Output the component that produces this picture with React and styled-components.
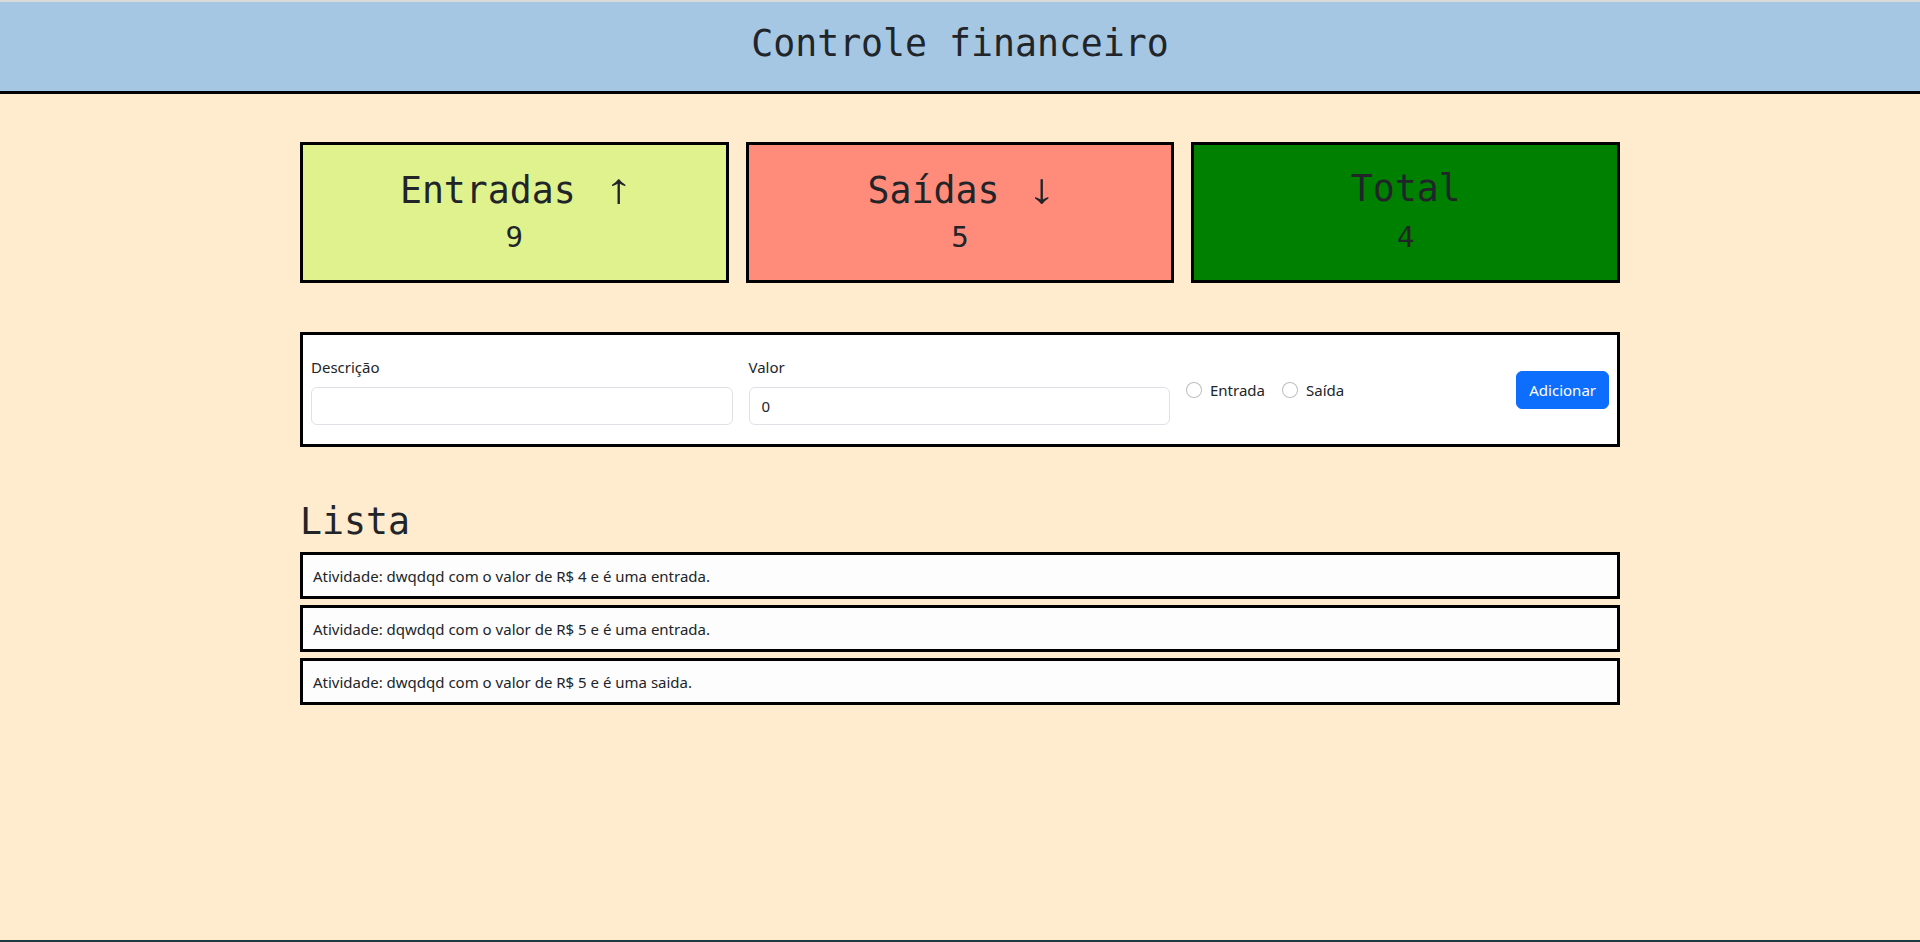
import React from 'react';
import styled, { createGlobalStyle } from 'styled-components';

const GlobalStyle = createGlobalStyle`
  html, body { margin: 0; padding: 0; }
  body {
    background: #ffebcd;
    font-family: "Noto Sans", sans-serif;
    color: #212529;
  }
  *, *::before, *::after { box-sizing: border-box; }
`;

const Page = styled.div`
  min-height: 100vh;
  display: flex;
  flex-direction: column;
  border-bottom: 2px solid #1f3a40;
`;

const Header = styled.header`
  height: 94px;
  background: #a5c7e3;
  border-top: 2px solid #d9d9d9;
  border-bottom: 3px solid #000;
  display: flex;
  justify-content: center;
  align-items: flex-start;
  padding-top: 20px;
`;

const mono = `"DejaVu Sans Mono", "Liberation Mono", monospace`;

const HeaderTitle = styled.h1`
  margin: 0;
  font-family: ${mono};
  font-size: 36.5px;
  line-height: 44px;
  font-weight: 400;
  color: #212529;
`;

const Main = styled.main`
  width: 1320px;
  margin: 0 auto;
  padding-top: 48px;
`;

const Cards = styled.section`
  display: grid;
  grid-template-columns: repeat(3, 1fr);
  gap: 17px;
`;

const Card = styled.div`
  height: 141px;
  border: 3px solid #000;
  background: ${(p) => p.$bg};
  padding-top: 22px;
  text-align: center;
`;

const CardTitle = styled.h1`
  margin: 0 0 8px;
  height: 44px;
  font-family: ${mono};
  font-size: 36.5px;
  line-height: 44px;
  font-weight: 400;
  color: #212529;
  white-space: pre;
`;

const Arrow = styled.span`
  display: inline-block;
  font-family: "Liberation Sans", Arial, sans-serif;
  font-size: 42px;
  line-height: 44px;
  font-weight: 400;
  margin-left: 10px;
  transform: scaleX(1.35);
`;

const CardValue = styled.h2`
  margin: 0;
  font-family: ${mono};
  font-size: 29px;
  line-height: 36px;
  font-weight: 400;
  color: #212529;
`;

const Form = styled.form`
  margin-top: 49px;
  border: 3px solid #000;
  background: #fff;
  padding: 20px 8px 19px;
  display: flex;
  align-items: center;
  gap: 16px;
`;

const Field = styled.div`
  flex: 0 0 421.5px;
  display: flex;
  flex-direction: column;
`;

const Label = styled.label`
  font-size: 15px;
  line-height: 24px;
  margin-bottom: 8px;
  color: #212529;
`;

const Input = styled.input`
  height: 38px;
  border: 1px solid #dee2e6;
  border-radius: 6px;
  padding: 6px 12px;
  font-family: "Noto Sans", sans-serif;
  font-size: 15px;
  color: #212529;
  background: #fff;
  outline: none;
`;

const Radios = styled.div`
  display: flex;
  align-items: center;
  gap: 17px;
`;

const Check = styled.label`
  display: flex;
  align-items: center;
  gap: 8px;
  font-size: 15px;
  line-height: 24px;
  color: #212529;
`;

const Radio = styled.input.attrs({ type: 'radio' })`
  appearance: none;
  width: 16px;
  height: 16px;
  margin: 0;
  border: 1px solid rgba(0, 0, 0, 0.25);
  border-radius: 50%;
  background: #fff;
`;

const Button = styled.button`
  margin-left: auto;
  height: 38px;
  padding: 6px 12px;
  border: 1px solid #0d6efd;
  border-radius: 6px;
  background: #0d6efd;
  color: #fff;
  font-family: "Noto Sans", sans-serif;
  font-size: 15px;
  line-height: 24px;
  cursor: pointer;
`;

const ListTitle = styled.h2`
  margin: 53px 0 8px;
  font-family: ${mono};
  font-size: 36.5px;
  line-height: 44px;
  font-weight: 400;
  color: #212529;
`;

const List = styled.ul`
  list-style: none;
  margin: 0;
  padding: 0;
  display: flex;
  flex-direction: column;
  gap: 6px;
`;

const Row = styled.li`
  height: 47px;
  border: 3px solid #000;
  background: #fdfdfd;
  padding: 0 10px;
  display: flex;
  align-items: center;
  font-size: 15px;
  color: #212529;
`;

const cards = [
  { title: 'Entradas', arrow: '↑', value: 9, bg: '#dff28d' },
  { title: 'Saídas', arrow: '↓', value: 5, bg: '#ff8c7a' },
  { title: 'Total', arrow: null, value: 4, bg: '#008000' },
];

const items = [
  'Atividade: dwqdqd com o valor de R$ 4 e é uma entrada.',
  'Atividade: dqwdqd com o valor de R$ 5 e é uma entrada.',
  'Atividade: dwqdqd com o valor de R$ 5 e é uma saida.',
];

export default function App() {
  return (
    <>
      <GlobalStyle />
      <Page>
        <Header>
          <HeaderTitle>Controle financeiro</HeaderTitle>
        </Header>
        <Main>
          <Cards>
            {cards.map((c) => (
              <Card key={c.title} $bg={c.bg}>
                <CardTitle>
                  {c.title}
                  {c.arrow && <> <Arrow>{c.arrow}</Arrow></>}
                </CardTitle>
                <CardValue>{c.value}</CardValue>
              </Card>
            ))}
          </Cards>
          <Form onSubmit={(e) => e.preventDefault()}>
            <Field>
              <Label>Descrição</Label>
              <Input type="text" defaultValue="" />
            </Field>
            <Field>
              <Label>Valor</Label>
              <Input type="number" defaultValue="0" />
            </Field>
            <Radios>
              <Check>
                <Radio name="tipo" />
                Entrada
              </Check>
              <Check>
                <Radio name="tipo" />
                Saída
              </Check>
            </Radios>
            <Button type="submit">Adicionar</Button>
          </Form>
          <ListTitle>Lista</ListTitle>
          <List>
            {items.map((t, i) => (
              <Row key={i}>{t}</Row>
            ))}
          </List>
        </Main>
      </Page>
    </>
  );
}
